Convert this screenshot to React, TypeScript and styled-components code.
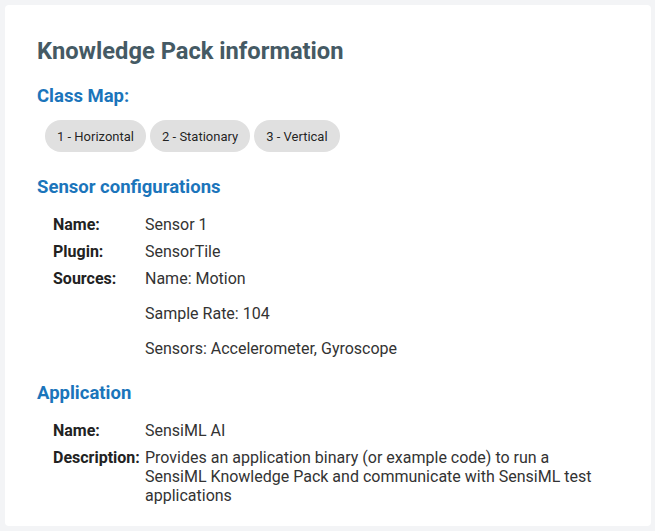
import React from "react";
import styled, { createGlobalStyle } from "styled-components";

const Global = createGlobalStyle`
  html, body { margin: 0; padding: 0; background: #f3f4f6; }
  body { font-family: Roboto, "Liberation Sans", Arial, sans-serif; }
  * { box-sizing: border-box; }
`;

const Page = styled.div`
  padding: 5px 4px 5px 5px;
  height: 531px;
`;

const Card = styled.div`
  background: #ffffff;
  border-radius: 4px;
  height: 521px;
  padding: 32px 32px 0 32px;
`;

const Title = styled.h1`
  margin: 0;
  font-size: 23.7px;
  line-height: 29px;
  font-weight: 700;
  color: #455a64;
`;

const Heading = styled.h2<{ $top: number }>`
  margin: ${(p) => p.$top}px 0 0 0;
  font-size: 18.5px;
  line-height: 22px;
  font-weight: 700;
  color: #1b75bb;
`;

const ChipRow = styled.div`
  display: flex;
  gap: 4px;
  margin: 13px 0 0 8px;
`;

const Chip = styled.span`
  display: inline-flex;
  align-items: center;
  height: 32px;
  padding: 0 12px;
  border-radius: 16px;
  background: #e0e0e0;
  color: rgba(0, 0, 0, 0.87);
  font-size: 13px;
`;

const Table = styled.div<{ $top: number }>`
  margin: ${(p) => p.$top}px 0 0 16px;
  display: grid;
  grid-template-columns: 92px 454px;
`;

const Label = styled.div`
  padding: 4px 0;
  font-size: 16px;
  line-height: 19px;
  font-weight: 700;
  color: #222222;
`;

const Value = styled.div`
  padding: 4px 0;
  min-width: 0;
  font-size: 16px;
  line-height: 19px;
  color: #333333;
`;

const SourceList = styled.div`
  display: flex;
  flex-direction: column;
  gap: 16px;
`;

export default function App() {
  return (
    <>
      <Global />
      <Page>
        <Card>
          <Title>Knowledge Pack information</Title>
          <Heading $top={19}>Class Map:</Heading>
          <ChipRow>
            <Chip>1 - Horizontal</Chip>
            <Chip>2 - Stationary</Chip>
            <Chip>3 - Vertical</Chip>
          </ChipRow>
          <Heading $top={24}>Sensor configurations</Heading>
          <Table $top={12.5}>
            <Label>Name:</Label>
            <Value>Sensor 1</Value>
            <Label>Plugin:</Label>
            <Value>SensorTile</Value>
            <Label>Sources:</Label>
            <Value>
              <SourceList>
                <span>Name: Motion</span>
                <span>Sample Rate: 104</span>
                <span>Sensors: Accelerometer, Gyroscope</span>
              </SourceList>
            </Value>
          </Table>
          <Heading $top={20}>Application</Heading>
          <Table $top={13}>
            <Label>Name:</Label>
            <Value>SensiML AI</Value>
            <Label>Description:</Label>
            <Value>
              Provides an application binary (or example code) to run a SensiML
              Knowledge Pack and communicate with SensiML test applications
            </Value>
          </Table>
        </Card>
      </Page>
    </>
  );
}
